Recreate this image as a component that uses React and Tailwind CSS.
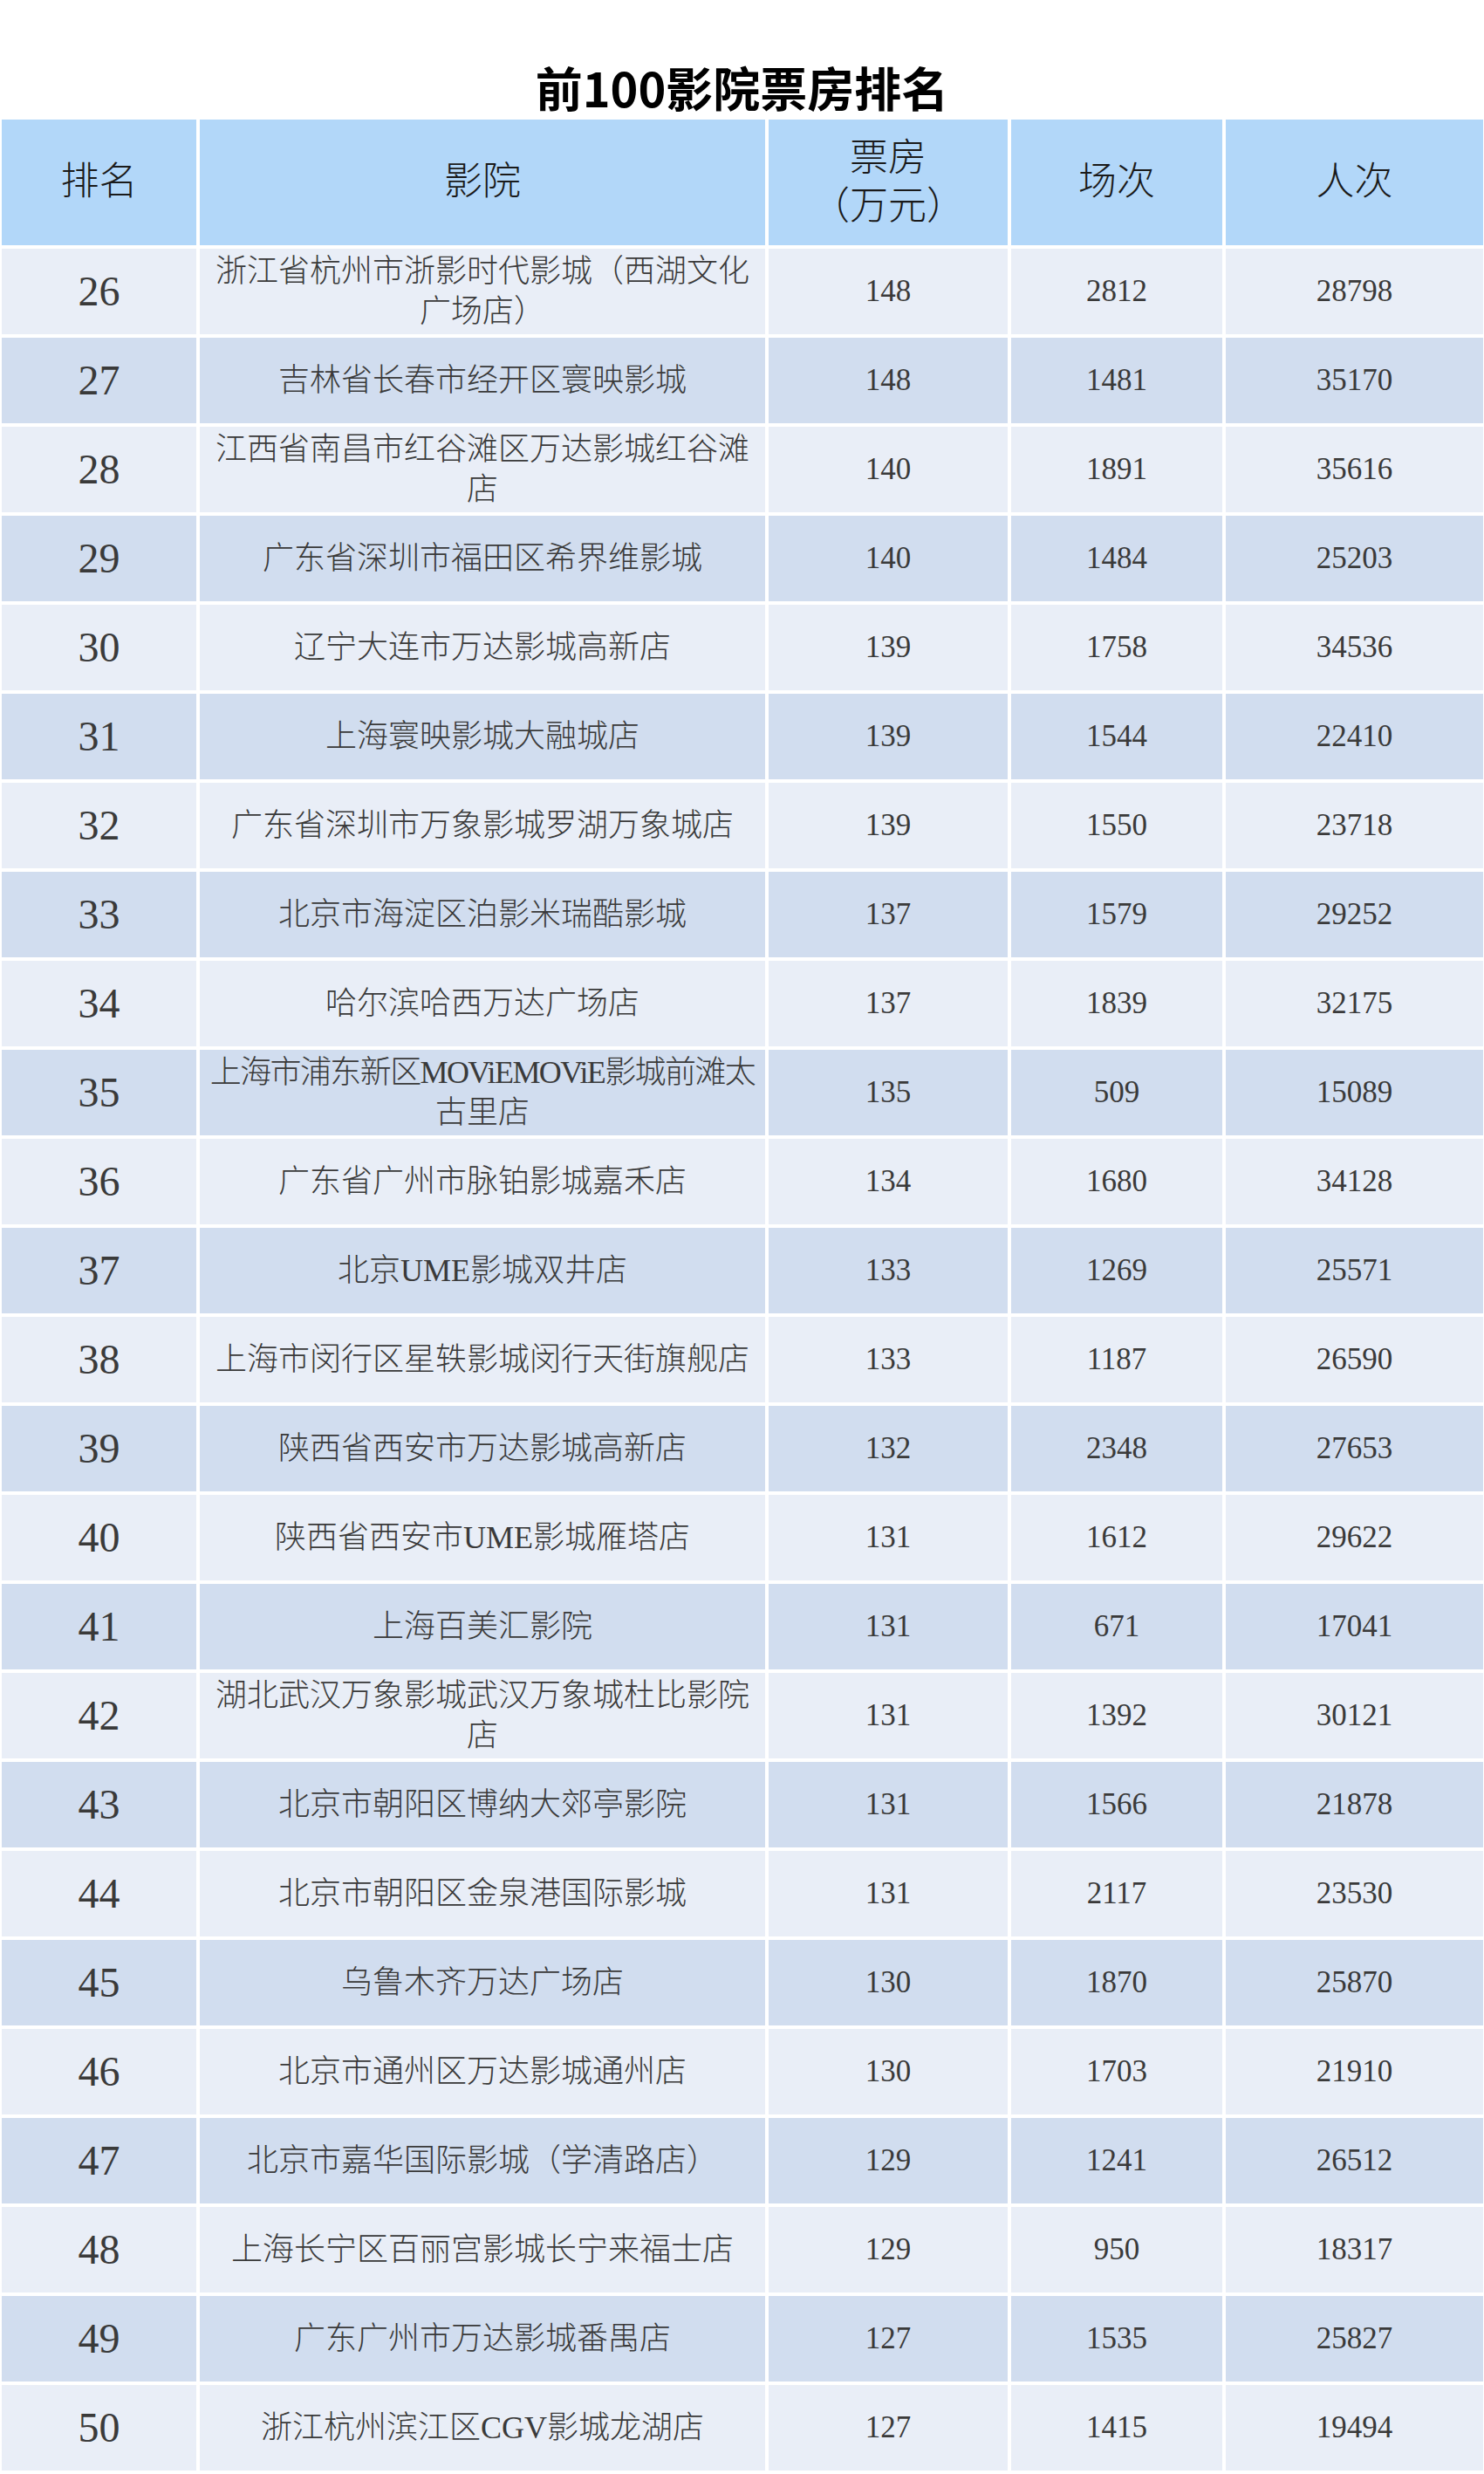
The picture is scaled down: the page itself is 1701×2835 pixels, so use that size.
const ROWS = [
  [26, ['浙江省杭州市浙影时代影城（西湖文化', '广场店）'], 148, 2812, 28798],
  [27, ['吉林省长春市经开区寰映影城'], 148, 1481, 35170],
  [28, ['江西省南昌市红谷滩区万达影城红谷滩', '店'], 140, 1891, 35616],
  [29, ['广东省深圳市福田区希界维影城'], 140, 1484, 25203],
  [30, ['辽宁大连市万达影城高新店'], 139, 1758, 34536],
  [31, ['上海寰映影城大融城店'], 139, 1544, 22410],
  [32, ['广东省深圳市万象影城罗湖万象城店'], 139, 1550, 23718],
  [33, ['北京市海淀区泊影米瑞酷影城'], 137, 1579, 29252],
  [34, ['哈尔滨哈西万达广场店'], 137, 1839, 32175],
  [35, ['上海市浦东新区MOViEMOViE影城前滩太', '古里店'], 135, 509, 15089, true],
  [36, ['广东省广州市脉铂影城嘉禾店'], 134, 1680, 34128],
  [37, ['北京UME影城双井店'], 133, 1269, 25571],
  [38, ['上海市闵行区星轶影城闵行天街旗舰店'], 133, 1187, 26590],
  [39, ['陕西省西安市万达影城高新店'], 132, 2348, 27653],
  [40, ['陕西省西安市UME影城雁塔店'], 131, 1612, 29622],
  [41, ['上海百美汇影院'], 131, 671, 17041],
  [42, ['湖北武汉万象影城武汉万象城杜比影院', '店'], 131, 1392, 30121],
  [43, ['北京市朝阳区博纳大郊亭影院'], 131, 1566, 21878],
  [44, ['北京市朝阳区金泉港国际影城'], 131, 2117, 23530],
  [45, ['乌鲁木齐万达广场店'], 130, 1870, 25870],
  [46, ['北京市通州区万达影城通州店'], 130, 1703, 21910],
  [47, ['北京市嘉华国际影城（学清路店）'], 129, 1241, 26512],
  [48, ['上海长宁区百丽宫影城长宁来福士店'], 129, 950, 18317],
  [49, ['广东广州市万达影城番禺店'], 127, 1535, 25827],
  [50, ['浙江杭州滨江区CGV影城龙湖店'], 127, 1415, 19494],
]

const GRID = 'grid grid-cols-[223px_648px_274px_242px_295px] gap-x-[4px]'
const SERIF = "font-['Liberation_Serif','Noto_Sans_CJK_SC',serif]"

function Cell({ bg, className = '', children }) {
  return <div className={`flex items-center justify-center text-center ${bg} ${className}`}>{children}</div>
}

export default function App() {
  return (
    <div className="w-[1701px] bg-white">
      <div className="flex h-[137px] items-end justify-center pb-[10px]">
        <h1 className="font-['Noto_Sans_CJK_SC',sans-serif] text-[54px] font-bold leading-none text-black">
          前100影院票房排名
        </h1>
      </div>

      <div className={`flex flex-col gap-y-[4px] pl-[2px] ${SERIF} text-[#3a3a3a]`}>
        <div className={`${GRID} h-[144px] text-[44px] font-light text-[#1a1a1a]`}>
          <Cell bg="bg-[#b2d7f9]">排名</Cell>
          <Cell bg="bg-[#b2d7f9]">影院</Cell>
          <Cell bg="bg-[#b2d7f9]" className="flex-col leading-[55px]">
            <span>票房</span>
            <span>（万元）</span>
          </Cell>
          <Cell bg="bg-[#b2d7f9]">场次</Cell>
          <Cell bg="bg-[#b2d7f9]">人次</Cell>
        </div>

        {ROWS.map(([rank, name, box, shows, people, tight], i) => {
          const bg = i % 2 === 0 ? 'bg-[#e9eef7]' : 'bg-[#d1ddef]'
          return (
            <div key={rank} className={`${GRID} h-[98px]`}>
              <Cell bg={bg} className="text-[48px]">{rank}</Cell>
              <Cell bg={bg} className="flex-col px-[6px] text-[36px] font-light leading-[46px]">
                {name.map((line, j) => (
                  <span
                    key={line}
                    className={`whitespace-nowrap ${tight && j === 0 ? 'tracking-[-1.6px]' : ''}`}
                  >
                    {line}
                  </span>
                ))}
              </Cell>
              <Cell bg={bg} className="text-[35px]">{box}</Cell>
              <Cell bg={bg} className="text-[35px]">{shows}</Cell>
              <Cell bg={bg} className="text-[35px]">{people}</Cell>
            </div>
          )
        })}
      </div>
    </div>
  )
}
